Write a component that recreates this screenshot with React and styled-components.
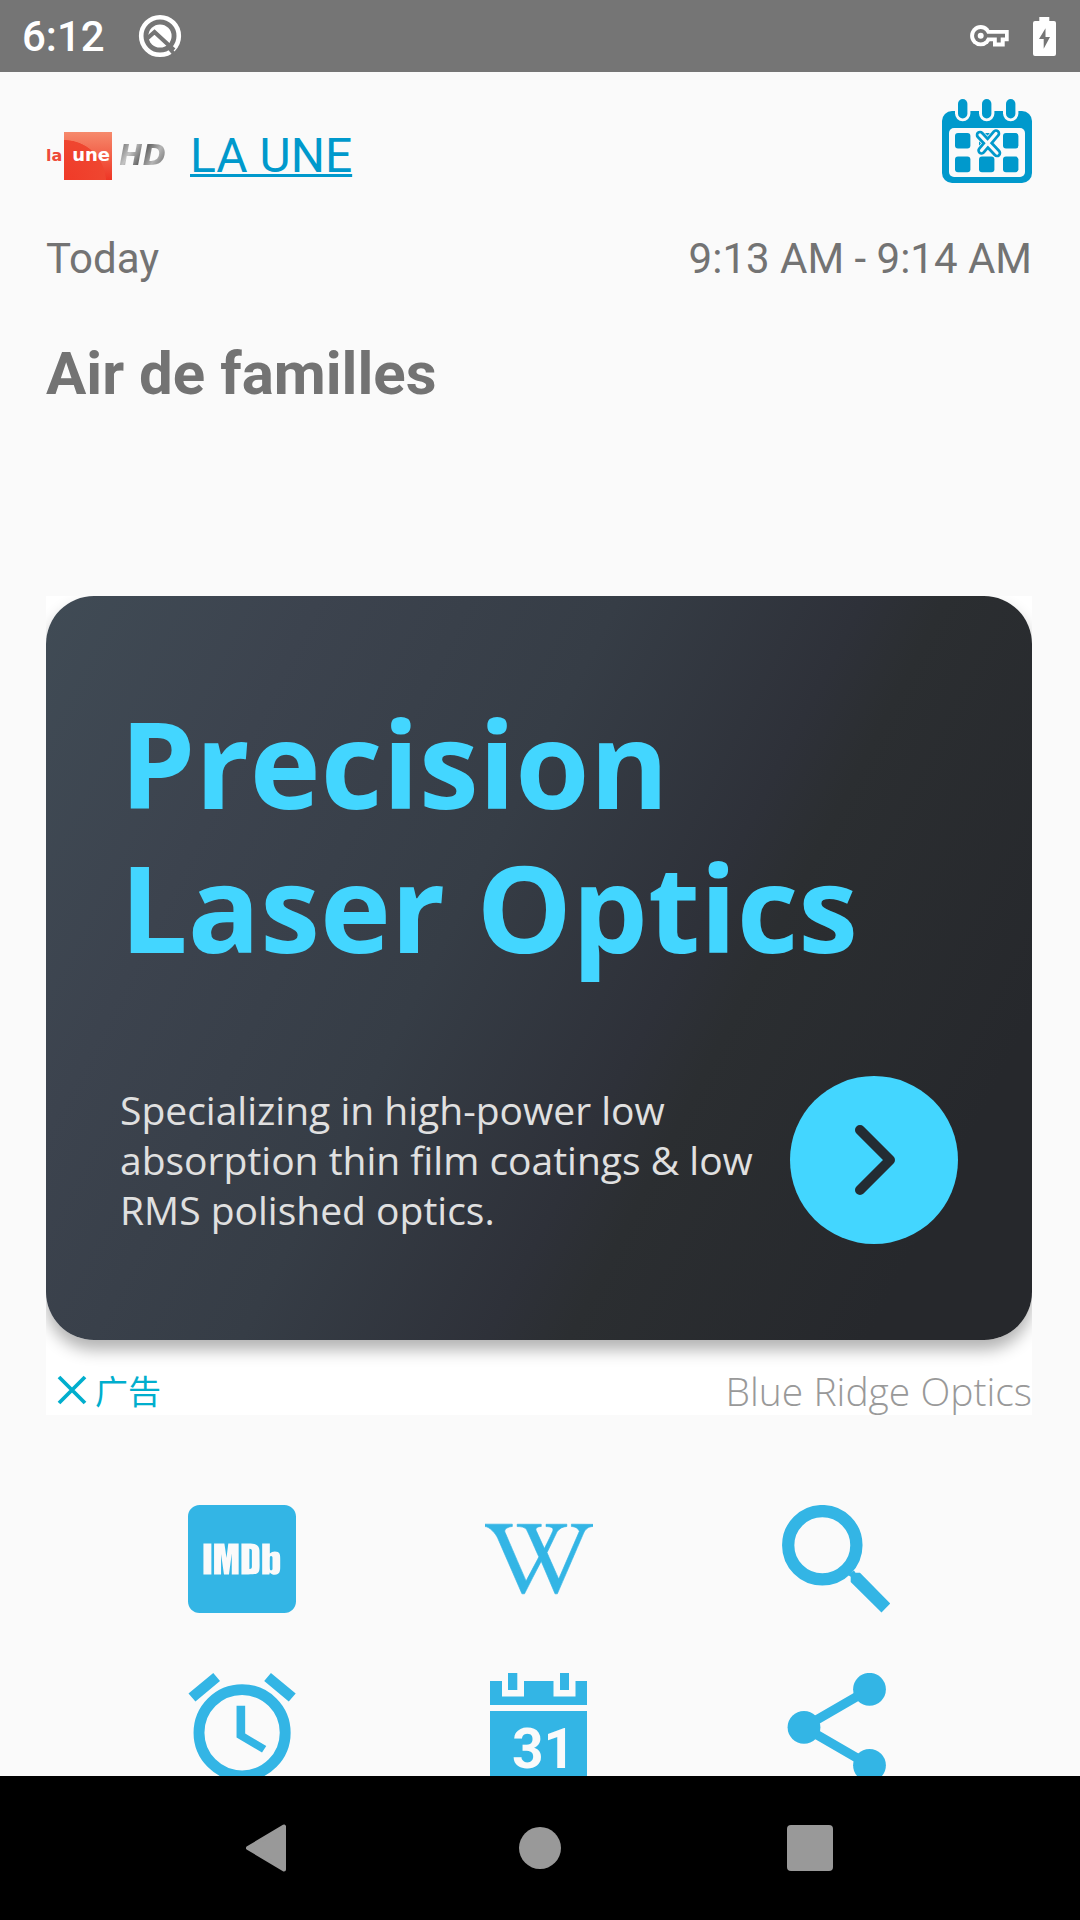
import React from "react";
import styled, { createGlobalStyle } from "styled-components";
import { FaImdb, FaWikipediaW } from "react-icons/fa";

const GlobalStyle = createGlobalStyle`
  * { box-sizing: border-box; }
  body { margin: 0; background: #fafafa; }
  button { padding: 0; border: 0; background: none; color: inherit; font: inherit; cursor: pointer; }
  h1, h2, p { margin: 0; }
  svg { display: block; flex: none; }
`;

const Screen = styled.div`
  display: flex;
  flex-direction: column;
  height: 100vh;
  overflow: hidden;
  background: #fafafa;
  color: #737373;
  font-family: Roboto, "Noto Sans", sans-serif;
`;

const StatusBar = styled.header`
  display: flex;
  flex: none;
  align-items: center;
  justify-content: space-between;
  height: 72px;
  padding: 0 24px 0 22px;
  background: #757575;
  color: #fff;
`;

const StatusGroup = styled.div`
  display: flex;
  align-items: center;
  gap: ${(p) => p.$gap}px;
`;

const Clock = styled.time`
  padding-top: 2px;
  font-size: 42px;
  font-weight: 500;
  line-height: 50px;
`;

const Content = styled.main`
  flex: 1;
  min-height: 0;
  overflow: hidden;
  padding: 27px 48px 0 46px;
`;

const ChannelBar = styled.div`
  display: flex;
  justify-content: space-between;
  align-items: flex-start;
  height: 85px;
`;

const Channel = styled.div`
  display: flex;
  align-items: center;
  align-self: flex-end;
  gap: 24px;
`;

const Logo = styled.div`
  display: flex;
  align-items: center;
  width: 120px;
  height: 48px;
  font-family: "DejaVu Sans", sans-serif;
  font-weight: 700;
`;

const LogoArticle = styled.span`
  width: 18px;
  color: #ee4a38;
  font-size: 16px;
  line-height: 48px;
`;

const LogoSquare = styled.span`
  width: 48px;
  height: 48px;
  padding-right: 2px;
  background:
    radial-gradient(circle at 0 50px, #f03a28 0 0, #ef4630 60%, transparent 61%) no-repeat,
    linear-gradient(#f68a6c, #ee3524);
  color: #fff;
  font-size: 18px;
  line-height: 46px;
  text-align: right;
`;

const LogoQuality = styled.span`
  margin-left: auto;
  background: linear-gradient(120deg, #555 5%, #c4c4c4 30%, #666 50%, #b5b5b5 68%, #555 95%);
  background-clip: text;
  color: transparent;
  font-size: 28px;
  font-style: italic;
  line-height: 48px;
`;

const ChannelLink = styled.a`
  color: #0099cc;
  font-size: 48px;
  line-height: 56px;
  text-decoration: underline;
  text-decoration-thickness: 3px;
`;

const Schedule = styled.div`
  display: flex;
  justify-content: space-between;
  margin-top: 50px;
  font-size: 42px;
  line-height: 50px;
`;

const Title = styled.h1`
  margin-top: 55px;
  font-size: 60px;
  font-weight: 700;
  line-height: 70px;
`;

const Ad = styled.section`
  margin-top: 187px;
  overflow: hidden;
  background: #fff;
  font-family: "Open Sans", "Noto Sans", sans-serif;
`;

const AdCard = styled.div`
  padding: 95px 74px 96px;
  border-radius: 48px;
  background: linear-gradient(117deg, #404b55 0%, #3c434e 20%, #363d46 42%, #2e3139 60%, #2b2e31 66%, #26282c 88%);
  box-shadow: 0 10px 16px rgba(0, 0, 0, 0.3);
`;

const AdHeading = styled.h2`
  color: #43d6ff;
  font-size: 120px;
  font-weight: 700;
  line-height: 144px;
`;

const AdBody = styled.div`
  display: flex;
  align-items: center;
  justify-content: space-between;
  gap: 24px;
  margin-top: 97px;
`;

const AdText = styled.p`
  color: #e0e0e0;
  font-size: 39px;
  line-height: 50px;
`;

const AdArrow = styled.button`
  display: flex;
  flex: none;
  align-items: center;
  justify-content: center;
  width: 168px;
  height: 168px;
  border-radius: 50%;
  background: #43d6ff;
`;

const AdFooter = styled.div`
  display: flex;
  align-items: flex-end;
  justify-content: space-between;
  height: 75px;
`;

const AdClose = styled.button`
  display: flex;
  align-items: center;
  gap: 8px;
  height: 50px;
  padding-left: 11px;
  color: #00aecd;
  font-family: "Noto Sans CJK SC", sans-serif;
  font-size: 33px;
  line-height: 48px;
`;

const Advertiser = styled.span`
  color: #999;
  font-size: 39px;
  font-weight: 300;
  line-height: 48px;
`;

const Actions = styled.nav`
  display: grid;
  grid-template-columns: repeat(3, 1fr);
  row-gap: 60px;
  margin-top: 90px;
  padding: 0 47px;
`;

const Action = styled.button`
  justify-self: center;
  width: 108px;
  height: 108px;
  color: #33b5e5;
`;

const NavBar = styled.footer`
  display: flex;
  flex: none;
  justify-content: center;
  height: 144px;
  background: #000;
  color: #999;
`;

const NavButton = styled.button`
  display: flex;
  align-items: center;
  justify-content: center;
  width: 25%;
`;

const BadgeIcon = () => (
  <svg width="44" height="44" viewBox="0 0 44 44" aria-hidden="true">
    <circle cx="22" cy="22" r="18.8" fill="none" stroke="#fff" strokeWidth="4.6" />
    <circle cx="22" cy="22" r="11.6" fill="#fff" />
    <path d="M8 25.500 16.500 18 36 36" fill="none" stroke="#757575" strokeWidth="4.2" />
    <path d="M31.5 34.5 37 41" stroke="#757575" strokeWidth="3.6" />
  </svg>
);

const KeyIcon = () => (
  <svg width="39" height="22" viewBox="0 0 39 22" aria-hidden="true">
    <g fill="#fff">
      <circle cx="10.700" cy="10.700" r="10.600" />
      <path d="M15 5H38.700V16.300H34.700V21.500H23V16.300H15z" />
    </g>
    <g fill="#757575">
      <circle cx="10.700" cy="10.700" r="6.700" />
      <path d="M15 8.800H35V12.400H30.700V17.500H26.800V12.400H15z" />
    </g>
    <circle cx="10.700" cy="10.700" r="3" fill="#fff" />
  </svg>
);

const BatteryIcon = () => (
  <svg width="23" height="39" viewBox="0 0 23 39" aria-hidden="true">
    <path
      fill="#fff"
      fillRule="evenodd"
      d="M6.3 0h10v4H21a2 2 0 0 1 2 2v31a2 2 0 0 1-2 2H2a2 2 0 0 1-2-2V6a2 2 0 0 1 2-2h4.300zM12.500 11.300 6 22h4.700v9.700L17 20h-4.500z"
    />
  </svg>
);

const PegX = [20.700, 44.700, 68.700];

const ScheduleIcon = () => (
  <svg width="90" height="84" viewBox="0 0 90 84" aria-hidden="true">
    <rect y="12" width="90" height="72" rx="10" fill="#0099cc" />
    <rect x="7" y="29" width="76" height="49" rx="5" fill="#fafafa" />
    {PegX.map((x) => (
      <g key={x}>
        <path d={`M${x} 4v10.500`} stroke="#fafafa" strokeWidth="15.400" strokeLinecap="round" />
        <path d={`M${x} 4.700v10`} stroke="#0099cc" strokeWidth="9.400" strokeLinecap="round" />
        <rect x={x - 7.700} y="34" width="15.400" height="15.400" rx="3" fill="#0099cc" />
        <rect x={x - 7.700} y="57.600" width="15.400" height="15.600" rx="3" fill="#0099cc" />
      </g>
    ))}
    <g strokeLinecap="round">
      <path d="M38 36 55 54M54 34.500 39.500 51.500" stroke="#fafafa" strokeWidth="10" />
      <path d="M38 36 55 54M54 34.500 39.500 51.500" stroke="#0099cc" strokeWidth="8.600" />
      <path d="M38 36 55 54M54 34.500 39.500 51.500" stroke="#fafafa" strokeWidth="3.200" />
    </g>
  </svg>
);

const ChevronIcon = () => (
  <svg width="42" height="72" viewBox="0 0 42 72" aria-hidden="true">
    <path d="M7 6 37 36 7 66" fill="none" stroke="#232c32" strokeWidth="10" strokeLinecap="round" strokeLinejoin="round" />
  </svg>
);

const CloseIcon = () => (
  <svg width="30" height="30" viewBox="0 0 30 30" aria-hidden="true">
    <path d="M2 2 28 28M28 2 2 28" stroke="currentColor" strokeWidth="3.800" />
  </svg>
);

const SearchIcon = () => (
  <svg width="108" height="108" viewBox="0 0 108 108" aria-hidden="true">
    <circle cx="40.300" cy="40.200" r="34.100" fill="none" stroke="currentColor" strokeWidth="12.300" />
    <path d="M72 65.500 73.500 67.700H78L108.300 98.500 99.500 107.500 68.700 77V71.700L66 70z" fill="currentColor" />
  </svg>
);

const AlarmIcon = () => (
  <svg width="108" height="108" viewBox="0 0 109 109" aria-hidden="true">
    <circle cx="54.600" cy="60.300" r="43.500" fill="none" stroke="currentColor" strokeWidth="11" />
    <path
      d="M25.500 0 32.300 8 7.500 28.700.500 20.700zM83.700 0 76.900 8 101.700 28.700 108.700 20.700zM49 33h8.700v28L79 73.700 74.700 80.300 49 65z"
      fill="currentColor"
    />
  </svg>
);

const DayIcon = () => (
  <svg width="108" height="108" viewBox="0 0 108 108" aria-hidden="true">
    <path
      d="M5 8h12v15.500h22V8h29.500v15.500h22V8H102v24H5zM23 0h9.300v17H23zM75 0h9v17h-9zM5 38h97v70H5z"
      fill="currentColor"
    />
    <text x="27" y="95" fill="#fafafa" fontFamily="Roboto, sans-serif" fontSize="55" fontWeight="700">
      31
    </text>
  </svg>
);

const ShareIcon = () => (
  <svg width="108" height="108" viewBox="0 0 108 108" aria-hidden="true">
    <path d="M87.500 16.300 22 54.300 87.500 92.300" fill="none" stroke="currentColor" strokeWidth="9.400" />
    <g fill="currentColor">
      <circle cx="87.500" cy="16.300" r="16.400" />
      <circle cx="22" cy="54.300" r="16.400" />
      <circle cx="87.500" cy="92.300" r="16.400" />
    </g>
  </svg>
);

const actions = [
  { label: "IMDb", icon: <FaImdb size={108} viewBox="0 32 448 448" /> },
  { label: "Wikipedia", icon: <FaWikipediaW size={108} viewBox="0 -64 640 640" stroke="currentColor" strokeWidth={4} /> },
  { label: "Search", icon: <SearchIcon /> },
  { label: "Set alarm", icon: <AlarmIcon /> },
  { label: "Add to calendar", icon: <DayIcon /> },
  { label: "Share", icon: <ShareIcon /> },
];

export default function App() {
  return (
    <Screen>
      <GlobalStyle />
      <StatusBar>
        <StatusGroup $gap={33}>
          <Clock>6:12</Clock>
          <BadgeIcon />
        </StatusGroup>
        <StatusGroup $gap={24}>
          <KeyIcon />
          <BatteryIcon />
        </StatusGroup>
      </StatusBar>

      <Content>
        <ChannelBar>
          <Channel>
            <Logo>
              <LogoArticle>la</LogoArticle>
              <LogoSquare>une</LogoSquare>
              <LogoQuality>HD</LogoQuality>
            </Logo>
            <ChannelLink href="#channel">LA UNE</ChannelLink>
          </Channel>
          <button type="button" aria-label="Schedule">
            <ScheduleIcon />
          </button>
        </ChannelBar>

        <Schedule>
          <span>Today</span>
          <span>9:13 AM - 9:14 AM</span>
        </Schedule>
        <Title>Air de familles</Title>

        <Ad>
          <AdCard>
            <AdHeading>Precision Laser Optics</AdHeading>
            <AdBody>
              <AdText>Specializing in high-power low absorption thin film coatings &amp; low RMS polished optics.</AdText>
              <AdArrow type="button" aria-label="Open">
                <ChevronIcon />
              </AdArrow>
            </AdBody>
          </AdCard>
          <AdFooter>
            <AdClose type="button">
              <CloseIcon />
              广告
            </AdClose>
            <Advertiser>Blue Ridge Optics</Advertiser>
          </AdFooter>
        </Ad>

        <Actions>
          {actions.map((a) => (
            <Action key={a.label} type="button" aria-label={a.label}>
              {a.icon}
            </Action>
          ))}
        </Actions>
      </Content>

      <NavBar>
        <NavButton type="button" aria-label="Back">
          <svg width="48" height="48" viewBox="0 0 48 48" aria-hidden="true">
            <path d="M2 24 38 2.500V45.500z" fill="currentColor" stroke="currentColor" strokeWidth="4" strokeLinejoin="round" />
          </svg>
        </NavButton>
        <NavButton type="button" aria-label="Home">
          <svg width="42" height="42" viewBox="0 0 42 42" aria-hidden="true">
            <circle cx="21" cy="21" r="21" fill="currentColor" />
          </svg>
        </NavButton>
        <NavButton type="button" aria-label="Recent apps">
          <svg width="46" height="46" viewBox="0 0 46 46" aria-hidden="true">
            <rect width="46" height="46" rx="4" fill="currentColor" />
          </svg>
        </NavButton>
      </NavBar>
    </Screen>
  );
}
